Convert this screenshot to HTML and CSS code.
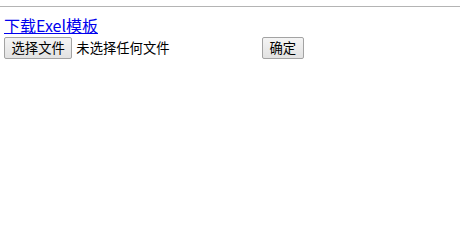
FILE: index.html
```html
<!DOCTYPE html>
<html lang="zh-CN">
<head>
<meta charset="utf-8">
<title>导入</title>
<link rel="stylesheet" href="styles.css">
</head>
<body>
<hr class="rule">
<div class="content">
  <div class="link-row"><a class="download" href="#">下载Exel模板</a></div>
  <form class="upload-row">
    <div class="file-field">
      <button type="button" class="btn">选择文件</button>
      <span class="file-name">未选择任何文件</span>
    </div>
    <button type="submit" class="btn">确定</button>
  </form>
</div>
</body>
</html>
```

FILE: styles.css
```css
html, body {
  margin: 0;
  padding: 0;
  background: #ffffff;
}
body {
  font-family: "Noto Sans CJK SC", "Liberation Sans", sans-serif;
  color: #000;
}
.rule {
  margin: 6px 0 0;
  border: 0;
  border-top: 1px solid #b4b4b4;
  height: 0;
}
.content {
  padding: 0 4px;
}
.link-row {
  margin-top: 8px;
  font-size: 16px;
  line-height: 20px;
}
.download {
  color: #0000ee;
  text-decoration: underline;
}
.upload-row {
  display: flex;
  align-items: center;
  margin: 2px 0 0;
  gap: 4px;
}
.file-field {
  display: flex;
  align-items: center;
  width: 254px;
  gap: 4px;
}
.btn {
  font-family: "Noto Sans CJK SC", "Liberation Sans", sans-serif;
  font-size: 13.333px;
  line-height: 18px;
  height: 22px;
  padding: 0 6.5px;
  margin: 0;
  color: #000;
  background: linear-gradient(#f4f4f4, #e2e2e2);
  border: 1px solid #a3a3a3;
  border-radius: 2px;
}
.file-name {
  font-size: 13.333px;
  line-height: 18px;
  color: #000;
}
```
